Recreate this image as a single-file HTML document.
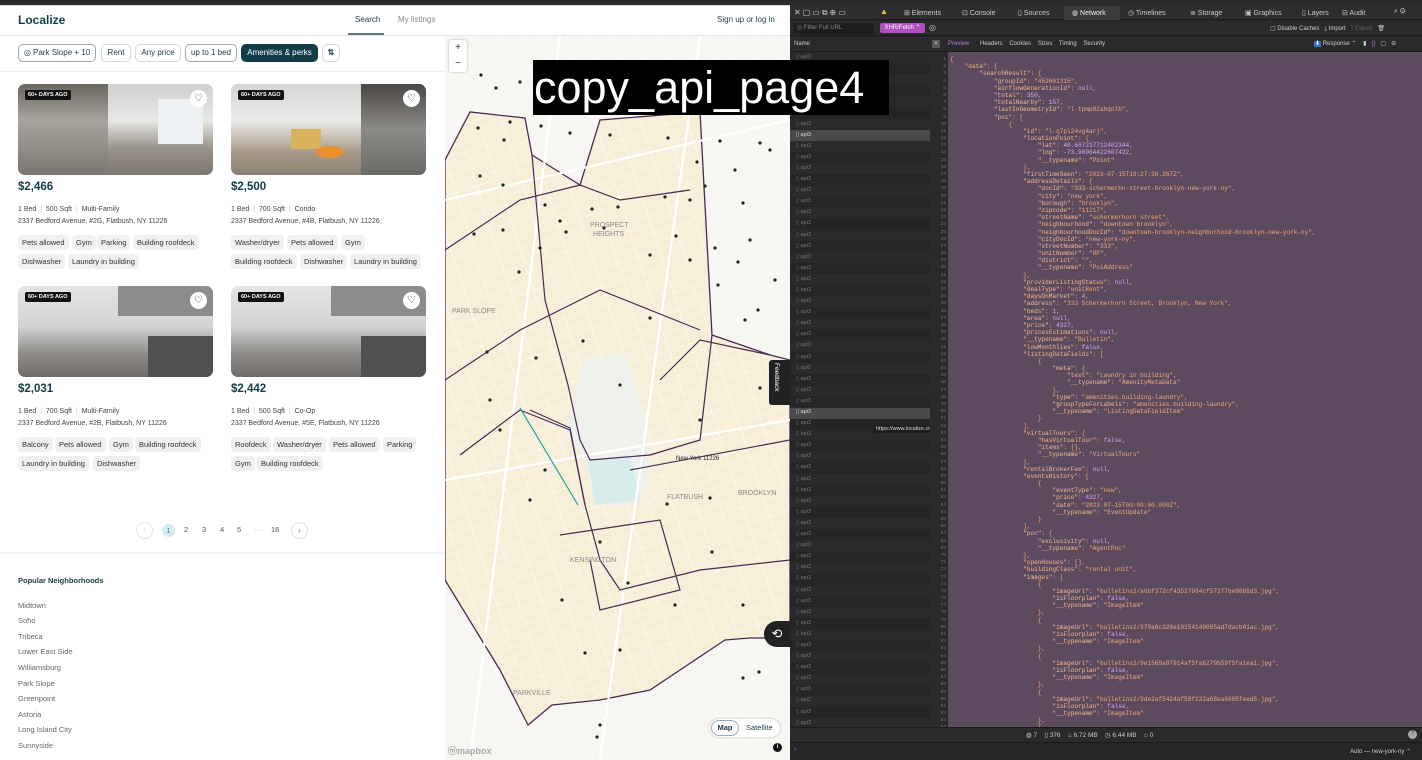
<!DOCTYPE html>
<html><head><meta charset="utf-8"><style>
*{box-sizing:border-box;margin:0;padding:0}
body{width:1422px;height:760px;overflow:hidden;position:relative;background:#fff;font-family:"Liberation Sans",sans-serif}
.a{position:absolute}
.tb{background:#2a2a2a}
.chip{position:absolute;top:44px;height:18px;border:1px solid #d5dadc;border-radius:5px;font-size:8px;color:#1d3b45;line-height:16px;text-align:center}
.img{position:absolute;width:195px;height:91px;border-radius:7px;overflow:hidden}
.badge{position:absolute;left:7px;top:6px;background:#111;color:#fff;font-size:5.5px;font-weight:bold;padding:2px 3px;border-radius:2px}
.heart{position:absolute;right:6px;top:6px;width:17px;height:17px;border-radius:50%;background:#fff;text-align:center;font-size:10px;line-height:17px;color:#333}
.price{position:absolute;font-size:11.5px;font-weight:bold;color:#123c48}
.det{position:absolute;font-size:7px;color:#444}
.addr{position:absolute;font-size:7px;color:#444}
.tag{position:absolute;height:15px;background:#eef0f1;border-radius:4px;font-size:7.5px;color:#333;line-height:15px;padding:0 4px;white-space:nowrap}
.nb{position:absolute;left:18px;font-size:7.5px;color:#666}
.pg{position:absolute;top:525px;font-size:7.5px;color:#555}
.dt{font-size:7px;color:#ccc}
pre{font-family:"Liberation Mono",monospace;font-size:6.1px;line-height:7.18px;color:#f0a878;white-space:pre}
.k{color:#f3b890}.n{color:#d5a4f7}
</style></head><body>
<div class="a tb" style="left:0;top:0;width:1422px;height:6px"></div>
<div class="a" style="left:0;top:5px;width:790px;height:1px;background:#ddd"></div>

<div class="a" style="left:18px;top:13px;font-size:12px;font-weight:bold;color:#0f3d4a">Localize</div>
<div class="a" style="left:355px;top:15px;font-size:8px;color:#1d3b45">Search</div>
<div class="a" style="left:348px;top:33px;width:36px;height:2px;background:#5d7a82"></div>
<div class="a" style="left:398px;top:15px;font-size:8px;color:#888">My listings</div>
<div class="a" style="left:717px;top:15px;font-size:8px;color:#1d3b45">Sign up or log in</div>
<div class="a" style="left:0;top:35px;width:790px;height:1px;background:#e6e9ea"></div>

<div class="chip" style="left:18px;width:78px;border-color:#9aa8ad">◎ Park Slope + 10</div>
<div class="chip" style="left:101px;width:30px">Rent</div>
<div class="chip" style="left:135px;width:46px">Any price</div>
<div class="chip" style="left:185px;width:52px;border-color:#9aa8ad">up to 1 bed</div>
<div class="chip" style="left:241px;width:77px;background:#123c48;color:#fff;border-color:#123c48">Amenities &amp; perks</div>
<div class="chip" style="left:322px;width:18px;font-weight:bold">⇅</div>
<div class="a" style="left:0;top:71px;width:445px;height:1px;background:#eceeef"></div>

<div class="img" style="left:18px;top:84px;background:linear-gradient(180deg,#cfcfcf 0%,#e8e8e6 40%,#9a948c 70%,#7e776f 100%)"><div class="a" style="left:0;top:0;width:90px;height:91px;background:linear-gradient(180deg,#6b6660 0%,#a7a39d 40%,#7a7670 100%)"></div><div class="a" style="left:140px;top:15px;width:45px;height:45px;background:#eef1f3"></div><div class="badge">60+ DAYS AGO</div><div class="heart">♡</div></div>
<div class="img" style="left:231px;top:84px;background:linear-gradient(180deg,#d4d4d2 0%,#ebebe9 40%,#a89a88 75%,#8a7f72 100%)"><div class="a" style="left:130px;top:0;width:65px;height:91px;background:linear-gradient(180deg,#4a4744,#8d8b88 50%,#6c6a66)"></div><div class="a" style="left:60px;top:45px;width:30px;height:20px;background:#d8b35a"></div><div class="a" style="left:85px;top:62px;width:28px;height:12px;border-radius:50%;background:#e9902c"></div><div class="badge">60+ DAYS AGO</div><div class="heart">♡</div></div>
<div class="price" style="left:18px;top:181px">$2,466</div>
<div class="price" style="left:231px;top:181px">$2,500</div>
<div class="det" style="left:18px;top:206px">1 Bed &nbsp;<span style="color:#ccc">|</span>&nbsp; 500 Sqft &nbsp;<span style="color:#ccc">|</span>&nbsp; Multi-Family</div>
<div class="det" style="left:231px;top:206px">1 Bed &nbsp;<span style="color:#ccc">|</span>&nbsp; 700 Sqft &nbsp;<span style="color:#ccc">|</span>&nbsp; Condo</div>
<div class="addr" style="left:18px;top:218px">2337 Bedford Avenue, #2G, Flatbush, NY 11226</div>
<div class="addr" style="left:231px;top:218px">2337 Bedford Avenue, #4B, Flatbush, NY 11226</div>
<div class="tag" style="left:18px;top:235px">Pets allowed</div><div class="tag" style="left:72px;top:235px">Gym</div><div class="tag" style="left:97px;top:235px">Parking</div><div class="tag" style="left:133px;top:235px">Building roofdeck</div>
<div class="tag" style="left:18px;top:254px">Dishwasher</div><div class="tag" style="left:68px;top:254px">Laundry in building</div>
<div class="tag" style="left:231px;top:235px">Washer/dryer</div><div class="tag" style="left:287px;top:235px">Pets allowed</div><div class="tag" style="left:341px;top:235px">Gym</div>
<div class="tag" style="left:231px;top:254px">Building roofdeck</div><div class="tag" style="left:300px;top:254px">Dishwasher</div><div class="tag" style="left:350px;top:254px">Laundry in building</div>

<div class="img" style="left:18px;top:286px;background:linear-gradient(180deg,#e4e4e4 0%,#d3d3d3 45%,#8d8a87 75%,#6f6c69 100%)"><div class="a" style="left:100px;top:0;width:95px;height:30px;background:#8c8c8c"></div><div class="a" style="left:130px;top:50px;width:65px;height:41px;background:#505050"></div><div class="badge">60+ DAYS AGO</div><div class="heart">♡</div></div>
<div class="img" style="left:231px;top:286px;background:linear-gradient(180deg,#e4e4e4 0%,#d3d3d3 45%,#8d8a87 75%,#6f6c69 100%)"><div class="a" style="left:100px;top:0;width:95px;height:30px;background:#8c8c8c"></div><div class="a" style="left:130px;top:50px;width:65px;height:41px;background:#505050"></div><div class="badge">60+ DAYS AGO</div><div class="heart">♡</div></div>
<div class="price" style="left:18px;top:383px">$2,031</div>
<div class="price" style="left:231px;top:383px">$2,442</div>
<div class="det" style="left:18px;top:408px">1 Bed &nbsp;<span style="color:#ccc">|</span>&nbsp; 700 Sqft &nbsp;<span style="color:#ccc">|</span>&nbsp; Multi-Family</div>
<div class="det" style="left:231px;top:408px">1 Bed &nbsp;<span style="color:#ccc">|</span>&nbsp; 500 Sqft &nbsp;<span style="color:#ccc">|</span>&nbsp; Co-Op</div>
<div class="addr" style="left:18px;top:420px">2337 Bedford Avenue, #2B, Flatbush, NY 11226</div>
<div class="addr" style="left:231px;top:420px">2337 Bedford Avenue, #5E, Flatbush, NY 11226</div>
<div class="tag" style="left:18px;top:437px">Balcony</div><div class="tag" style="left:55px;top:437px">Pets allowed</div><div class="tag" style="left:109px;top:437px">Gym</div><div class="tag" style="left:135px;top:437px">Building roofdeck</div>
<div class="tag" style="left:18px;top:456px">Laundry in building</div><div class="tag" style="left:93px;top:456px">Dishwasher</div>
<div class="tag" style="left:231px;top:437px">Roofdeck</div><div class="tag" style="left:273px;top:437px">Washer/dryer</div><div class="tag" style="left:329px;top:437px">Pets allowed</div><div class="tag" style="left:383px;top:437px">Parking</div>
<div class="tag" style="left:231px;top:456px">Gym</div><div class="tag" style="left:257px;top:456px">Building roofdeck</div>

<div class="a" style="left:136px;top:522px;width:17px;height:17px;border:1px solid #e4e7e8;border-radius:50%;font-size:7px;color:#ccc;text-align:center;line-height:15px">‹</div>
<div class="a" style="left:162px;top:524px;width:13px;height:13px;border-radius:50%;background:#d4ecef;font-size:7.5px;color:#3b8a99;text-align:center;line-height:13px">1</div>
<div class="pg" style="left:184px">2</div><div class="pg" style="left:202px">3</div><div class="pg" style="left:220px">4</div><div class="pg" style="left:237px">5</div><div class="pg" style="left:254px;color:#aaa">···</div><div class="pg" style="left:271px">16</div>
<div class="a" style="left:291px;top:522px;width:17px;height:17px;border:1px solid #dde1e3;border-radius:50%;font-size:8px;color:#3b8a99;text-align:center;line-height:15px">›</div>
<div class="a" style="left:0;top:552px;width:445px;height:2px;background:#f3f4f5"></div>

<div class="a" style="left:18px;top:576px;font-size:7.5px;font-weight:bold;color:#1d3b45">Popular Neighborhoods</div>
<div class="nb" style="top:601px">Midtown</div><div class="nb" style="top:616px">Soho</div><div class="nb" style="top:632px">Tribeca</div><div class="nb" style="top:647px">Lower East Side</div><div class="nb" style="top:663px">Williamsburg</div><div class="nb" style="top:679px">Park Slope</div><div class="nb" style="top:694px">Greenpoint</div><div class="nb" style="top:710px">Astoria</div><div class="nb" style="top:725px">Long Island City</div><div class="nb" style="top:741px">Sunnyside</div>

<svg class="a" style="left:445px;top:36px" width="345" height="724" viewBox="445 36 345 724">
<defs>
<pattern id="st" width="9" height="9" patternUnits="userSpaceOnUse" patternTransform="rotate(-18)">
<line x1="0" y1="0" x2="9" y2="0" stroke="#ffffff" stroke-width="0.8"/>
</pattern>
<pattern id="st2" width="22" height="22" patternUnits="userSpaceOnUse" patternTransform="rotate(72)">
<line x1="0" y1="0" x2="22" y2="0" stroke="#ffffff" stroke-width="1"/>
</pattern>
</defs>
<rect x="445" y="36" width="345" height="724" fill="#f7f6f3"/>
<rect x="445" y="36" width="345" height="724" fill="url(#st2)" opacity="0.8"/>
<polygon points="445,160 470,112 525,118 532,155 580,185 600,120 700,112 712,335 770,355 790,360 790,638 750,638 725,640 650,690 600,700 552,705 528,725 500,670 445,580" fill="#f6eed7"/>
<polygon points="445,160 470,112 525,118 532,155 580,185 600,120 700,112 712,335 770,355 790,360 790,638 750,638 725,640 650,690 600,700 552,705 528,725 500,670 445,580" fill="url(#st)"/>
<polygon points="445,160 470,112 525,118 532,155 580,185 600,120 700,112 712,335 770,355 790,360 790,638 750,638 725,640 650,690 600,700 552,705 528,725 500,670 445,580" fill="url(#st2)" stroke="#4a2a52" stroke-width="1.3"/>
<polygon points="585,360 625,352 645,420 650,470 640,505 595,505 585,460 565,430" fill="#eef0ec"/>
<polygon points="588,460 630,455 640,500 595,505" fill="#d9ecec"/>
<g stroke="#fff" stroke-width="2.2" fill="none">
<line x1="445" y1="200" x2="790" y2="120"/><line x1="470" y1="760" x2="560" y2="36"/><line x1="445" y1="480" x2="790" y2="420"/><line x1="600" y1="760" x2="700" y2="36"/>
</g>
<g stroke="#4a2a52" stroke-width="1.2" fill="none">
<polyline points="532,155 545,300 568,385 580,440 590,460 650,455 700,440 712,335"/>
<polyline points="445,250 520,200 580,185 620,200 690,190"/>
<polyline points="460,455 520,410 570,430 585,505 600,560 620,590 700,570 790,560"/>
<polyline points="445,380 520,330 600,290 700,330"/>
<polyline points="660,380 700,340 770,355"/>
<polyline points="560,535 660,520 680,590 600,610 590,560"/>
<polyline points="530,410 570,428 585,505"/>
<polyline points="630,470 790,440"/>
</g>
<line x1="520" y1="408" x2="578" y2="505" stroke="#1aa0a0" stroke-width="1.2"/>
<g fill="#222">
<circle cx="481" cy="75" r="1.6"/><circle cx="520" cy="82" r="1.6"/><circle cx="496" cy="88" r="1.6"/><circle cx="510" cy="122" r="1.6"/><circle cx="478" cy="128" r="1.6"/><circle cx="504" cy="140" r="1.6"/><circle cx="541" cy="126" r="1.6"/><circle cx="570" cy="133" r="1.6"/><circle cx="610" cy="135" r="1.6"/><circle cx="668" cy="138" r="1.6"/><circle cx="720" cy="141" r="1.6"/><circle cx="735" cy="170" r="1.6"/><circle cx="760" cy="143" r="1.6"/><circle cx="743" cy="203" r="1.6"/><circle cx="770" cy="150" r="1.6"/><circle cx="750" cy="240" r="1.6"/><circle cx="775" cy="280" r="1.6"/><circle cx="745" cy="320" r="1.6"/><circle cx="758" cy="310" r="1.6"/>
<circle cx="480" cy="176" r="1.6"/><circle cx="503" cy="185" r="1.6"/><circle cx="545" cy="205" r="1.6"/><circle cx="560" cy="221" r="1.6"/><circle cx="592" cy="209" r="1.6"/><circle cx="618" cy="207" r="1.6"/><circle cx="665" cy="197" r="1.6"/><circle cx="690" cy="200" r="1.6"/><circle cx="705" cy="186" r="1.6"/><circle cx="697" cy="162" r="1.6"/>
<circle cx="503" cy="230" r="1.6"/><circle cx="519" cy="272" r="1.6"/><circle cx="474" cy="234" r="1.6"/><circle cx="540" cy="248" r="1.6"/><circle cx="566" cy="232" r="1.6"/><circle cx="604" cy="228" r="1.6"/><circle cx="650" cy="255" r="1.6"/><circle cx="676" cy="236" r="1.6"/><circle cx="690" cy="260" r="1.6"/><circle cx="715" cy="248" r="1.6"/><circle cx="738" cy="262" r="1.6"/><circle cx="718" cy="285" r="1.6"/>
<circle cx="487" cy="352" r="1.6"/><circle cx="490" cy="400" r="1.6"/><circle cx="500" cy="430" r="1.6"/><circle cx="536" cy="358" r="1.6"/><circle cx="583" cy="341" r="1.6"/><circle cx="620" cy="385" r="1.6"/><circle cx="545" cy="470" r="1.6"/><circle cx="530" cy="500" r="1.6"/><circle cx="600" cy="542" r="1.6"/><circle cx="628" cy="583" r="1.6"/><circle cx="562" cy="600" r="1.6"/><circle cx="620" cy="650" r="1.6"/><circle cx="585" cy="653" r="1.6"/><circle cx="667" cy="504" r="1.6"/><circle cx="710" cy="498" r="1.6"/><circle cx="712" cy="552" r="1.6"/><circle cx="675" cy="605" r="1.6"/><circle cx="743" cy="605" r="1.6"/><circle cx="743" cy="678" r="1.6"/><circle cx="759" cy="672" r="1.6"/><circle cx="600" cy="725" r="1.6"/><circle cx="597" cy="737" r="1.6"/><circle cx="700" cy="420" r="1.6"/><circle cx="650" cy="318" r="1.6"/><circle cx="760" cy="388" r="1.6"/>
</g>
<g font-family="Liberation Sans" font-size="7" fill="#8a8a8a">
<text x="590" y="227">PROSPECT</text><text x="593" y="236">HEIGHTS</text><text x="452" y="313">PARK SLOPE</text>
<text x="570" y="562">KENSINGTON</text><text x="667" y="499">FLATBUSH</text><text x="738" y="495">BROOKLYN</text><text x="513" y="695">PARKVILLE</text>
<text x="676" y="460" fill="#222" font-size="6">New York 11226</text>
</g>
</svg>
<div class="a" style="left:449px;top:40px;width:18px;height:32px;background:#fff;border-radius:3px;box-shadow:0 0 2px #aaa;font-size:10px;text-align:center;line-height:16px;color:#333">+<br>−</div>
<div class="a" style="left:769px;top:360px;width:21px;height:45px;background:#222;border-radius:3px 0 0 3px"></div>
<div class="a" style="left:773px;top:363px;font-size:6.5px;color:#fff;writing-mode:vertical-rl">Feedback</div>
<div class="a" style="left:764px;top:621px;width:26px;height:26px;border-radius:13px 0 0 13px;background:#222;color:#fff;font-size:13px;text-align:center;line-height:26px">⟲</div>
<div class="a" style="left:710px;top:719px;width:70px;height:18px;background:#fff;border-radius:9px;box-shadow:0 0 2px #aaa"></div>
<div class="a" style="left:711px;top:720px;width:28px;height:16px;border:1px solid #9ab;border-radius:8px;font-size:7.5px;font-weight:bold;text-align:center;line-height:14px;color:#1d3b45">Map</div>
<div class="a" style="left:746px;top:723px;font-size:7.5px;color:#1d3b45">Satellite</div>
<div class="a" style="left:773px;top:743px;width:9px;height:9px;border-radius:50%;background:#111;color:#fff;font-size:6px;text-align:center;line-height:9px;font-weight:bold">i</div>
<div class="a" style="left:448px;top:744px;font-size:9px;color:#aaa;font-weight:bold">ⓜmapbox</div>

<div class="a" style="left:790px;top:6px;width:632px;height:754px;background:#262626"></div>
<div class="a" style="left:790px;top:6px;width:632px;height:14px;background:#2e2e2e;border-bottom:1px solid #1a1a1a"></div>
<div class="a dt" style="left:794px;top:8px;font-size:8px;letter-spacing:2px">✕▢▭⧉⊕▭</div>
<div class="a" style="left:880px;top:7px;font-size:8px;color:#f3c13a">▲</div>
<div class="a dt" style="left:904px;top:9px">⊞ Elements</div>
<div class="a dt" style="left:962px;top:9px">⊡ Console</div>
<div class="a dt" style="left:1018px;top:9px">▯ Sources</div>
<div class="a" style="left:1064px;top:6px;width:56px;height:14px;background:#3c3c3c"></div>
<div class="a dt" style="left:1072px;top:9px;color:#eee">◍ Network</div>
<div class="a dt" style="left:1128px;top:9px">◷ Timelines</div>
<div class="a dt" style="left:1190px;top:9px">≣ Storage</div>
<div class="a dt" style="left:1245px;top:9px">▣ Graphics</div>
<div class="a dt" style="left:1302px;top:9px">▯ Layers</div>
<div class="a dt" style="left:1342px;top:9px">⊟ Audit</div>
<div class="a dt" style="left:1394px;top:8px">⌕ ⚙</div>
<div class="a" style="left:790px;top:21px;width:632px;height:15px;background:#2a2a2a;border-bottom:1px solid #1a1a1a"></div>
<div class="a" style="left:793px;top:23px;width:81px;height:11px;background:#1e1e1e;border-radius:2px;font-size:6px;color:#888;line-height:11px;padding-left:4px">◎ Filter Full URL</div>
<div class="a" style="left:880px;top:23px;width:45px;height:10px;background:#b04fc2;border-radius:2px;font-size:6px;color:#fff;line-height:10px;text-align:center">XHR/Fetch ⌃</div>
<div class="a dt" style="left:929px;top:23px;font-size:8px">◎</div>
<div class="a dt" style="left:1270px;top:25px;font-size:6px">▢ Disable Caches &nbsp; ⤓ Import &nbsp; <span style="color:#666">⤒ Export</span> &nbsp; 🗑</div>
<div class="a" style="left:790px;top:37px;width:140px;height:15px;background:#2a2a2a;border-bottom:1px solid #1a1a1a;font-size:6px;color:#ccc;line-height:15px;padding-left:4px">Name</div>
<div class="a" style="left:930px;top:37px;width:492px;height:15px;background:#2a2a2a;border-bottom:1px solid #1a1a1a"></div>
<div class="a" style="left:932px;top:40px;width:8px;height:8px;background:#555;font-size:6px;color:#ccc;text-align:center;line-height:8px">✕</div>
<div class="a" style="left:948px;top:41px;font-size:6px;color:#b57bd0">Preview</div>
<div class="a dt" style="left:980px;top:41px;font-size:6px">Headers &nbsp;&nbsp; Cookies &nbsp;&nbsp; Sizes &nbsp;&nbsp; Timing &nbsp;&nbsp; Security</div>
<div class="a dt" style="left:1314px;top:40px;font-size:6px"><span style="background:#2f6ed0;color:#fff;padding:0 1px">⬇</span> Response ⌃ &nbsp;&nbsp; ▮ &nbsp; <span style="color:#b57bd0">{}</span> &nbsp; ▢ &nbsp; ⊖</div>

<div class="a" style="left:790px;top:52px;width:140px;height:675px;background:repeating-linear-gradient(180deg,#2a2a2a 0,#2a2a2a 11.1px,#252525 11.1px,#252525 22.2px)"></div>
<div class="a" style="left:790px;top:130px;width:140px;height:11px;background:#4a4a4a"></div>
<div class="a" style="left:790px;top:408px;width:140px;height:11px;background:#4a4a4a"></div>
<div class="a" style="left:790px;top:52px;width:140px;height:675px;font-size:5.5px;color:#777;line-height:11.1px;padding-left:6px;overflow:hidden">
▯ api3<br>▯ api3<br>▯ api3<br>▯ api3<br>▯ api3<br>▯ api3<br>▯ api3<br><span style="color:#ddd">▯ api3</span><br>▯ api3<br>▯ api3<br>▯ api3<br>▯ api3<br>▯ api3<br>▯ api3<br>▯ api3<br>▯ api3<br>▯ api3<br>▯ api3<br>▯ api3<br>▯ api3<br>▯ api3<br>▯ api3<br>▯ api3<br>▯ api3<br>▯ api3<br>▯ api3<br>▯ api3<br>▯ api3<br>▯ api2<br>▯ api3<br>▯ api3<br>▯ api3<br><span style="color:#ddd">▯ api3</span><br>▯ api3<br>▯ api3<br>▯ api3<br>▯ api3<br>▯ api3<br>▯ api3<br>▯ api3<br>▯ api3<br>▯ api3<br>▯ api3<br>▯ api3<br>▯ api3<br>▯ api3<br>▯ api3<br>▯ api3<br>▯ api3<br>▯ api3<br>▯ api3<br>▯ api3<br>▯ api3<br>▯ api3<br>▯ api3<br>▯ api3<br>▯ api3<br>▯ api3<br>▯ api2<br>▯ api3<br>▯ api3</div>
<div class="a" style="left:873px;top:425px;background:#1e1e1e;color:#ddd;font-size:5.5px;padding:1px 3px">https://www.localize.city/nyc/api3</div>

<div class="a" style="left:930px;top:52px;width:18px;height:675px;background:#2a2a2a"></div>
<div class="a" style="left:948px;top:52px;width:474px;height:675px;background:#5c4b5f"></div>
<pre class="a" style="left:930px;top:56px;width:16px;text-align:right;color:#777;font-size:4.5px">1
2
3
4
5
6
7
8
9
10
11
12
13
14
15
16
17
18
19
20
21
22
23
24
25
26
27
28
29
30
31
32
33
34
35
36
37
38
39
40
41
42
43
44
45
46
47
48
49
50
51
52
53
54
55
56
57
58
59
60
61
62
63
64
65
66
67
68
69
70
71
72
73
74
75
76
77
78
79
80
81
82
83
84
85
86
87
88
89
90
91
92
93
94</pre>
<pre class="a" style="left:950px;top:56px;color:#f0a878">{
    <span class="k">"data"</span>: {
        <span class="k">"searchResult"</span>: {
            <span class="k">"groupId"</span>: "452001315",
            <span class="k">"airflowGenerationId"</span>: <span class="n">null</span>,
            <span class="k">"total"</span>: <span class="n">350</span>,
            <span class="k">"totalNearby"</span>: <span class="n">157</span>,
            <span class="k">"lastInGeometryId"</span>: "l-tpmp82ahqolb",
            <span class="k">"poi"</span>: [
                {
                    <span class="k">"id"</span>: "l-q7pl24vg4arj",
                    <span class="k">"locationPoint"</span>: {
                        <span class="k">"lat"</span>: <span class="n">40.687217712402344</span>,
                        <span class="k">"lng"</span>: <span class="n">-73.90064422607422</span>,
                        <span class="k">"__typename"</span>: "Point"
                    },
                    <span class="k">"firstTimeSeen"</span>: "2023-07-15T19:27:36.267Z",
                    <span class="k">"addressDetails"</span>: {
                        <span class="k">"docId"</span>: "333-schermerhn-street-brooklyn-new-york-ny",
                        <span class="k">"city"</span>: "new york",
                        <span class="k">"borough"</span>: "brooklyn",
                        <span class="k">"zipcode"</span>: "11217",
                        <span class="k">"streetName"</span>: "schermerhorn street",
                        <span class="k">"neighbourhood"</span>: "downtown brooklyn",
                        <span class="k">"neighbourhoodDocId"</span>: "downtown-brooklyn-neighborhood-brooklyn-new-york-ny",
                        <span class="k">"cityDocId"</span>: "new-york-ny",
                        <span class="k">"streetNumber"</span>: "333",
                        <span class="k">"unitNumber"</span>: "8P",
                        <span class="k">"district"</span>: "",
                        <span class="k">"__typename"</span>: "PoiAddress"
                    },
                    <span class="k">"providerListingStatus"</span>: <span class="n">null</span>,
                    <span class="k">"dealType"</span>: "unitRent",
                    <span class="k">"daysOnMarket"</span>: <span class="n">4</span>,
                    <span class="k">"address"</span>: "333 Schermerhorn Street, Brooklyn, New York",
                    <span class="k">"beds"</span>: <span class="n">1</span>,
                    <span class="k">"area"</span>: <span class="n">null</span>,
                    <span class="k">"price"</span>: <span class="n">4327</span>,
                    <span class="k">"pricesEstimations"</span>: <span class="n">null</span>,
                    <span class="k">"__typename"</span>: "Bulletin",
                    <span class="k">"lowMonthlies"</span>: <span class="n">false</span>,
                    <span class="k">"listingDataFields"</span>: [
                        {
                            <span class="k">"meta"</span>: {
                                <span class="k">"text"</span>: "Laundry in building",
                                <span class="k">"__typename"</span>: "AmenityMetaData"
                            },
                            <span class="k">"type"</span>: "amenities.building-laundry",
                            <span class="k">"groupTypeForLabels"</span>: "amenities.building-laundry",
                            <span class="k">"__typename"</span>: "ListingDataFieldItem"
                        }
                    ],
                    <span class="k">"virtualTours"</span>: {
                        <span class="k">"hasVirtualTour"</span>: <span class="n">false</span>,
                        <span class="k">"items"</span>: [],
                        <span class="k">"__typename"</span>: "VirtualTours"
                    },
                    <span class="k">"rentalBrokerFee"</span>: <span class="n">null</span>,
                    <span class="k">"eventsHistory"</span>: [
                        {
                            <span class="k">"eventType"</span>: "new",
                            <span class="k">"price"</span>: <span class="n">4327</span>,
                            <span class="k">"date"</span>: "2023-07-15T00:00:00.000Z",
                            <span class="k">"__typename"</span>: "EventUpdate"
                        }
                    ],
                    <span class="k">"poc"</span>: {
                        <span class="k">"exclusivity"</span>: <span class="n">null</span>,
                        <span class="k">"__typename"</span>: "AgentPoc"
                    },
                    <span class="k">"openHouses"</span>: [],
                    <span class="k">"buildingClass"</span>: "rental unit",
                    <span class="k">"images"</span>: [
                        {
                            <span class="k">"imageUrl"</span>: "bulletins2/a6bf372cf43527994cf57277be80b5d3.jpg",
                            <span class="k">"isFloorplan"</span>: <span class="n">false</span>,
                            <span class="k">"__typename"</span>: "ImageItem"
                        },
                        {
                            <span class="k">"imageUrl"</span>: "bulletins2/879a0c320e10154149095ad7dacb01ac.jpg",
                            <span class="k">"isFloorplan"</span>: <span class="n">false</span>,
                            <span class="k">"__typename"</span>: "ImageItem"
                        },
                        {
                            <span class="k">"imageUrl"</span>: "bulletins2/9e1569a97914af5fa6279b59f5fa1ea1.jpg",
                            <span class="k">"isFloorplan"</span>: <span class="n">false</span>,
                            <span class="k">"__typename"</span>: "ImageItem"
                        },
                        {
                            <span class="k">"imageUrl"</span>: "bulletins2/9de2af5424af58f132a68ea6005feed5.jpg",
                            <span class="k">"isFloorplan"</span>: <span class="n">false</span>,
                            <span class="k">"__typename"</span>: "ImageItem"
                        },
                        {</pre>

<div class="a" style="left:790px;top:727px;width:632px;height:15px;background:#2a2a2a;border-top:1px solid #1a1a1a"></div>
<div class="a dt" style="left:1026px;top:731px;font-size:6.5px">◍ 7 &nbsp;&nbsp; ▯ 376 &nbsp;&nbsp; ⌂ 6.72 MB &nbsp;&nbsp; ◷ 6.44 MB &nbsp;&nbsp; ⌂ 0</div>
<div class="a" style="left:1408px;top:730px;width:9px;height:9px;border-radius:50%;background:#aaa;color:#333;font-size:6px;text-align:center;line-height:9px">?</div>
<div class="a" style="left:790px;top:742px;width:632px;height:18px;background:#262626;border-top:1px solid #1a1a1a"></div>
<div class="a" style="left:794px;top:746px;font-size:7px;color:#c05ad8">›</div>
<div class="a dt" style="left:1350px;top:748px;font-size:6px">Auto — new-york-ny ⌃</div>

<div class="a" style="left:533px;top:60px;width:356px;height:55px;background:#000;color:#fff;font-size:45px;line-height:55px;padding-left:1px;white-space:nowrap;overflow:hidden">copy_api_page4</div>
</body></html>
